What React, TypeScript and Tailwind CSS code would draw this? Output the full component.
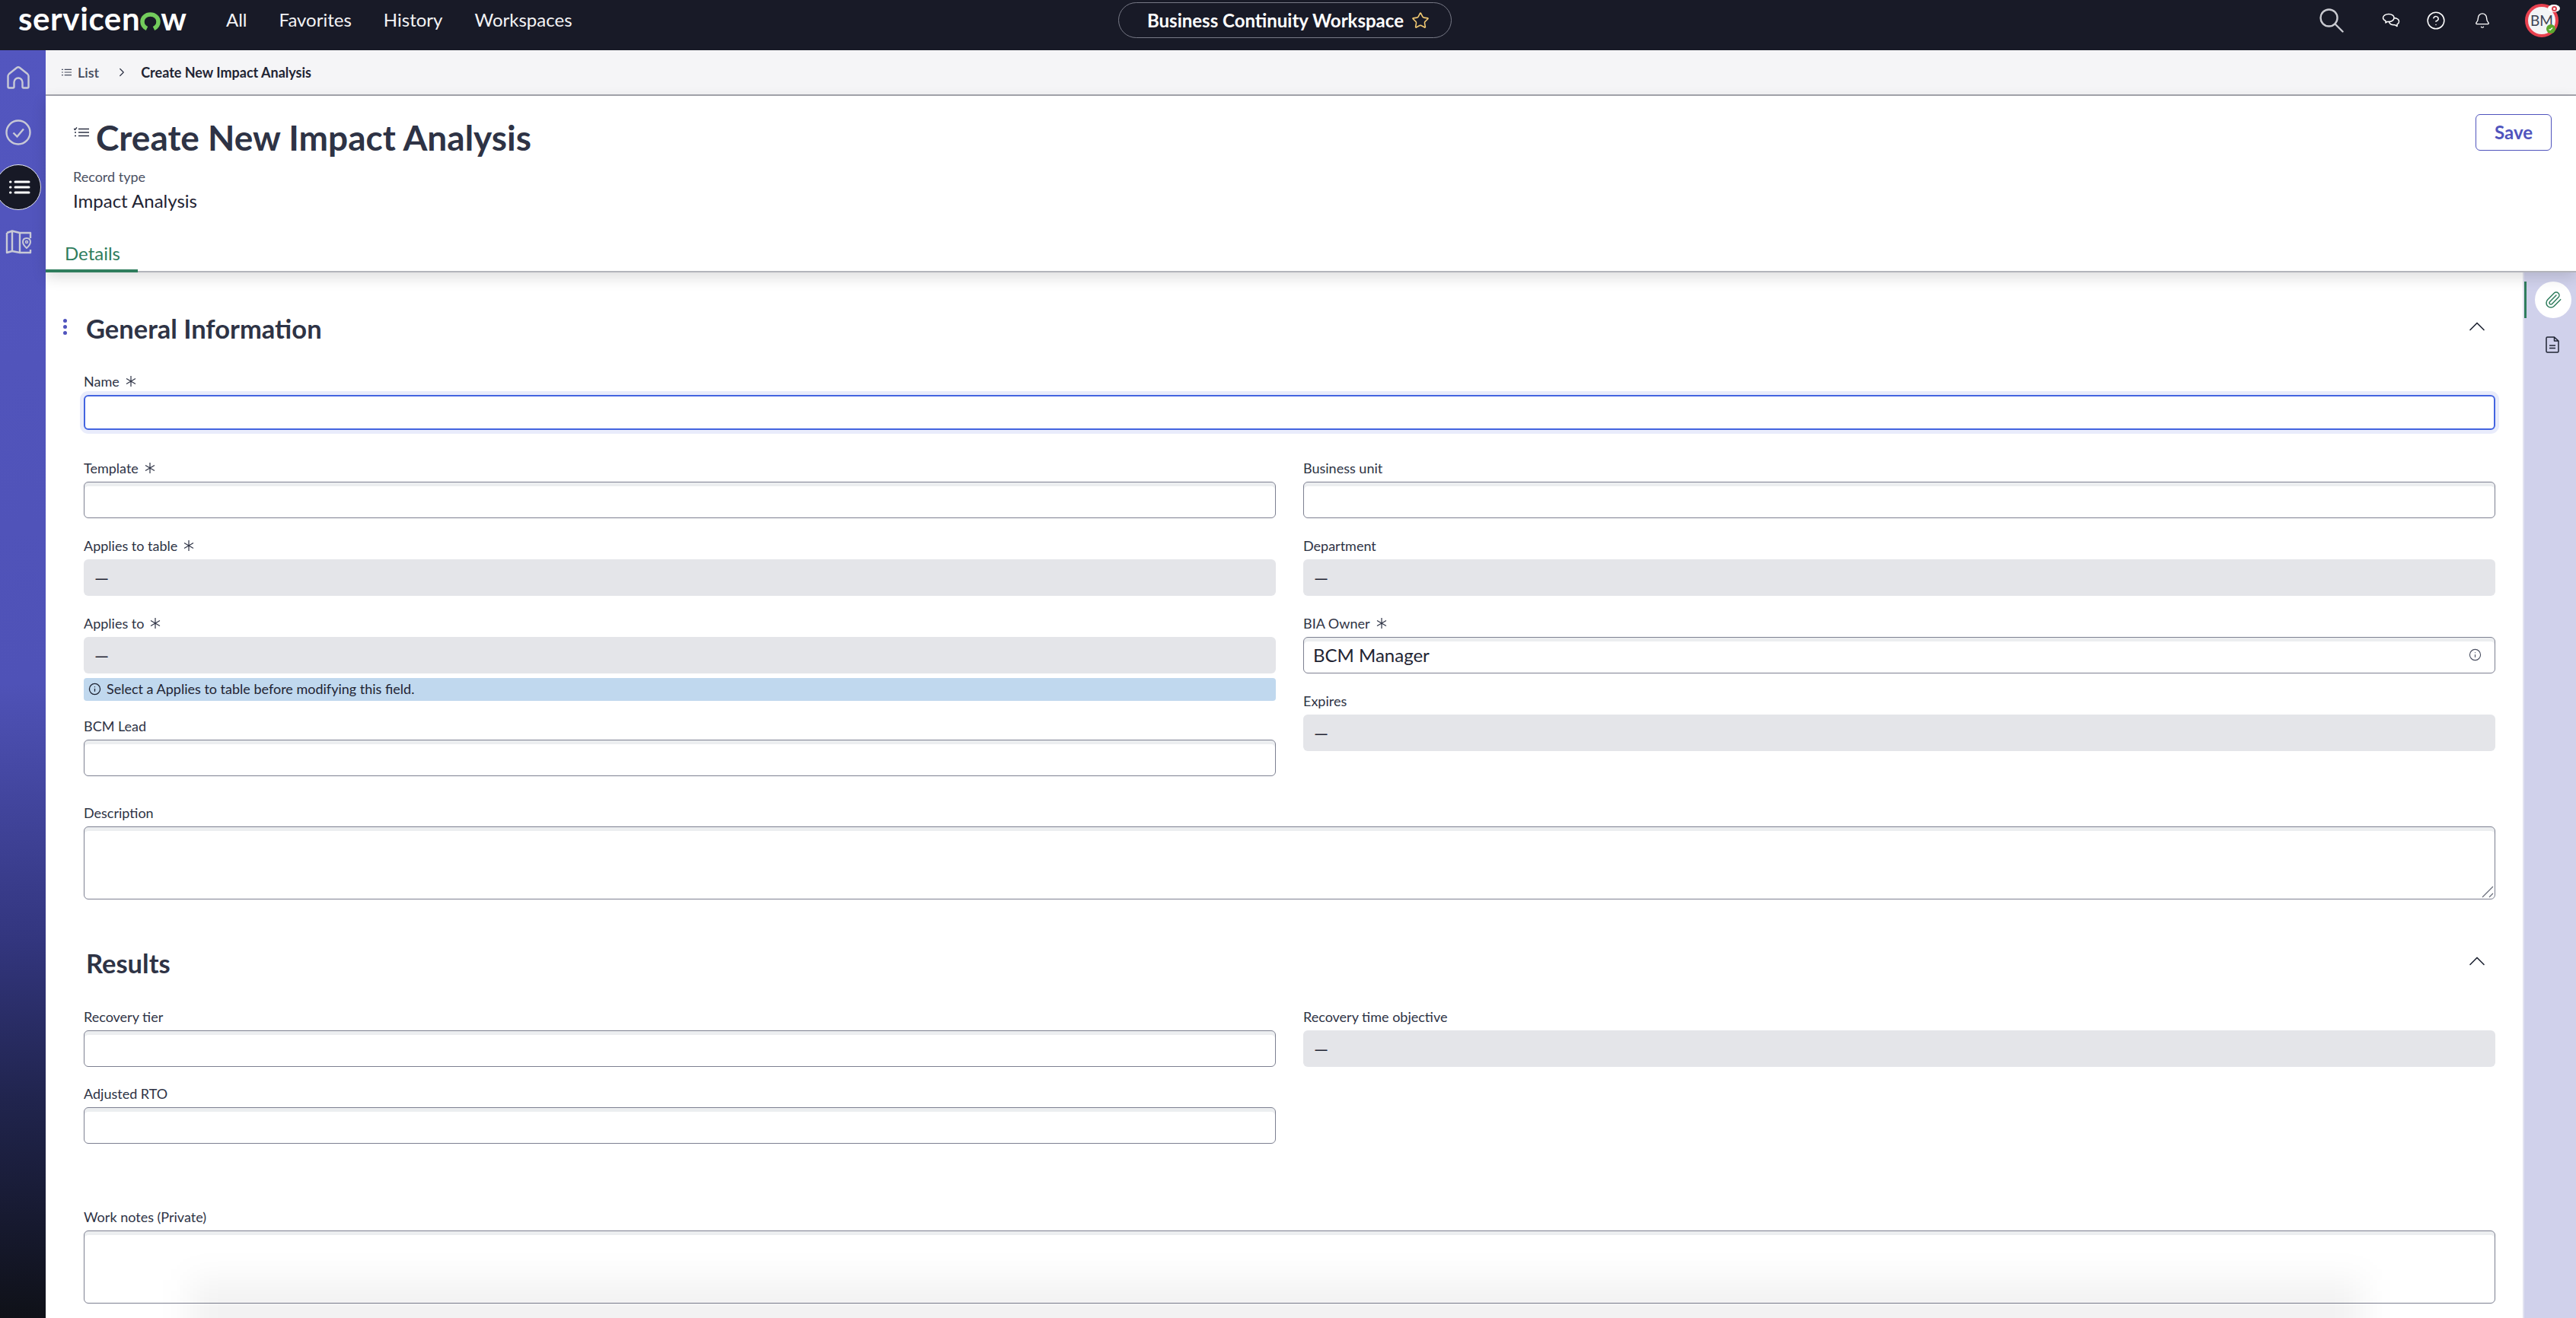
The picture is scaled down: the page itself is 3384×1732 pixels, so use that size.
import React from "react";
import { CircleHelp, Bell, ChevronUp, ChevronRight, Star, Paperclip, Info } from "lucide-react";

function Asterisk() {
  return (
    <svg viewBox="0 0 16 16" className="ml-[7px] h-[16px] w-[16px] text-[#2e3345]" fill="none" stroke="currentColor" strokeWidth="1.2">
      <path d="M8 1v14M2 4.5l12 7M14 4.5l-12 7" />
    </svg>
  );
}

function Label({ text, req }: { text: string; req?: boolean }) {
  return (
    <div className="flex h-[34px] items-center pb-[2px] text-[18px] text-[#2e3345]">
      <span>{text}</span>
      {req && <Asterisk />}
    </div>
  );
}

function Input({ label, req, children, h = "h-[48px]" }: { label: string; req?: boolean; children?: React.ReactNode; h?: string }) {
  return (
    <div>
      <Label text={label} req={req} />
      <div className={`relative flex items-center rounded-[6px] border-[1.5px] border-[#7d8091] bg-white shadow-[inset_0_5px_0_#eceef0] ${h}`}>
        {children}
      </div>
    </div>
  );
}

function ReadOnly({ label, req }: { label: string; req?: boolean }) {
  return (
    <div>
      <Label text={label} req={req} />
      <div className="flex h-[48px] items-center rounded-[6px] bg-[#e4e5e9] pl-[14px] text-[24px] text-[#1f2433]">—</div>
    </div>
  );
}

function ListIcon({ className }: { className: string }) {
  return (
    <svg viewBox="0 0 28 20" className={className} fill="none" stroke="currentColor" strokeLinecap="round">
      <path strokeWidth="3" d="M8 3h18M8 10h18M8 17h18" />
      <path strokeWidth="3" d="M1.5 3h.5M1.5 10h.5M1.5 17h.5" />
    </svg>
  );
}

export default function App() {
  return (
    <div className="flex h-[1732px] w-[3384px] flex-col overflow-hidden bg-white font-['Lato','Liberation_Sans',sans-serif] text-[#2e3345]">
      <header className="relative flex h-[66px] shrink-0 items-center bg-[#181a27] text-white">
        <div className="ml-[24px] flex h-[50px] w-[224px] -translate-y-[9px] items-center text-[42px] font-bold leading-none tracking-[0.6px]">
          <span>servicen</span>
          <svg viewBox="0 0 27 24" className="mt-[8px] h-[24px] w-[27px] shrink-0" role="img" aria-label="o">
            <path d="M9 21.500C5 19.500 3 16 3 12.500 3 7 7.500 3 13.500 3S24 7 24 12.500c0 3.500-2 7-6 9" fill="none" stroke="#73cc5c" strokeWidth="5.500" />
          </svg>
          <span>w</span>
        </div>
        <nav className="ml-[49px] flex -translate-y-[7px] items-center gap-[42px] text-[24px] text-[#f3f3f5]">
          <span>All</span>
          <span>Favorites</span>
          <span>History</span>
          <span>Workspaces</span>
        </nav>
        <div className="absolute left-[1469px] top-[3px] flex h-[47px] w-[438px] items-center rounded-full border-[1.5px] border-[#777986] pl-[37px]">
          <span className="text-[24px] font-bold">Business Continuity Workspace</span>
          <Star className="ml-[10px] h-[24px] w-[24px] text-[#f0c872]" strokeWidth={1.6} />
        </div>
        <div className="ml-auto mr-[23px] flex -translate-y-[6px] items-center">
          <svg viewBox="0 0 32 32" className="h-[32px] w-[32px] text-[#c9cad0]" fill="none" stroke="currentColor" strokeWidth="2.400" strokeLinecap="round">
            <circle cx="12.500" cy="12.500" r="11" />
            <path d="M20.500 20.500L30.500 30.500" />
          </svg>
          <svg viewBox="0 0 24 20" className="ml-[50px] h-[20px] w-[24px]" fill="none" stroke="white" strokeWidth="1.5" strokeLinejoin="round">
            <path d="M9 1.500c4 0 7 2.200 7 5s-3 5-7 5c-.7 0-1.200 0-1.700-.1L5 13v-2.600C2.900 9.500 1.500 8.100 1.500 6.500c0-2.800 3.300-5 7.500-5z" />
            <path d="M15.500 6.500c3.800.3 7 2 7 4.800 0 1.500-1 2.800-2.500 3.600V17.500l-2.600-1.700c-3.400.3-7-1-8-4" />
          </svg>
          <CircleHelp className="ml-[34px] h-[26px] w-[26px] text-white" strokeWidth={1.4} />
          <Bell className="ml-[37px] h-[22px] w-[22px] text-white" strokeWidth={1.5} />
          <div className="relative ml-[45px] flex h-[44px] w-[44px] items-center justify-center rounded-full border-[4px] border-[#e8414f] bg-[#f3f4f6] text-[19px] text-[#3f4454]">
            BM
            <span className="absolute left-[26px] -top-[3px] flex h-[10px] w-[16px] items-center justify-center rounded-[50%] bg-white">
              <span className="h-[7px] w-[7px] rounded-full border-[2px] border-[#d9414f]" />
            </span>
            <svg viewBox="0 0 12 12" className="absolute left-[24px] top-[23px] h-[12px] w-[12px]">
              <circle cx="6" cy="6" r="6" fill="#5ba82d" />
              <path d="M3.500 6.500l1.500 1 3-3" fill="none" stroke="white" strokeWidth="1.300" />
            </svg>
          </div>
        </div>
      </header>
      <div className="flex min-h-0 flex-1">
        <aside className="flex w-[60px] shrink-0 flex-col bg-[linear-gradient(180deg,#5356bf_0%,#4f52b7_50%,#33367f_70%,#20244d_83%,#0f1118_100%)] text-[#c8c9d6]">
          <svg viewBox="0 0 30 30" className="ml-[9px] mt-[21px] h-[30px] w-[30px]" fill="none" stroke="currentColor" strokeWidth="2.400" strokeLinejoin="round">
            <path d="M3 28.500a1.500 1.500 0 01-1.500-1.500V13q0-1.500 1.500-3L13 2q2-1.500 4 0l10 8q1.500 1.500 1.500 3v14a1.500 1.500 0 01-1.500 1.500h-5a1.500 1.500 0 01-1.500-1.500v-6a5.500 5.500 0 00-11 0v6a1.500 1.500 0 01-1.500 1.500z" />
          </svg>
          <svg viewBox="0 0 34 34" className="ml-[7px] mt-[40px] h-[34px] w-[34px]" fill="none" stroke="currentColor" strokeWidth="2.400">
            <circle cx="17" cy="17" r="15.500" />
            <path d="M10.500 17.500l5 5 8.500-10" />
          </svg>
          <div className="-ml-[6px] mt-[25px] flex h-[60px] w-[60px] items-center justify-center rounded-full border border-[#e7e8f4] bg-[#171926] pl-[4px]">
            <ListIcon className="h-[20px] w-[28px] text-white" />
          </div>
          <svg viewBox="0 0 36 32" className="ml-[7px] mt-[26px] h-[32px] w-[36px]" fill="none" stroke="currentColor" strokeWidth="2.400" strokeLinejoin="round">
            <path d="M2 4l7-2.500 10 2.500h14v7M2 4v26l7-2 10 2h14v-4M9 1.500V28M19 4v26" />
            <path d="M28 11c-3 0-5 2-5 5 0 3.500 5 8 5 8s5-4.500 5-8c0-3-2-5-5-5z" strokeWidth="2" />
            <circle cx="28" cy="16" r="1.500" strokeWidth="1.500" />
          </svg>
        </aside>
        <main className="flex min-w-0 flex-1 flex-col">
          <div className="flex h-[60px] shrink-0 items-center border-b-[2px] border-[#a5a6ae] bg-[#f5f5f7] pl-[21px] text-[18px]">
            <svg viewBox="0 0 14 12" className="h-[12px] w-[13px] text-[#444a5c]" fill="none" stroke="currentColor" strokeWidth="1.300">
              <path d="M4 2h10M4 6h10M4 10h10M0 2h2M0 6h2M0 10h2" />
            </svg>
            <span className="ml-[8px] font-semibold text-[#444a5c]">List</span>
            <ChevronRight className="ml-[21px] h-[18px] w-[18px] text-[#2e3345]" strokeWidth={1.6} />
            <span className="ml-[16px] font-bold text-[#1f2433]">Create New Impact Analysis</span>
          </div>
          <div className="relative z-10 h-[232px] shrink-0 border-b-[2px] border-[#b3b4bb] bg-white shadow-[0_6px_18px_rgba(0,0,0,0.14)]">
            <div className="flex items-start justify-between pl-[37px] pr-[32px] pt-[24px]">
              <div className="flex items-start">
                <svg viewBox="0 0 20 14" className="mt-[17px] h-[14px] w-[20px] text-[#2e3345]" fill="none" stroke="currentColor" strokeWidth="1.400">
                  <path d="M6 2.500h14M6 7h14M6 11.500h14M0 2l1.500 1.500L4 0.500M1 7h2M1 11.500h2" />
                </svg>
                <h1 className="ml-[9px] text-[46px] font-bold leading-[62px] text-[#2e3345]">Create New Impact Analysis</h1>
              </div>
              <button className="h-[48px] w-[100px] rounded-[6px] border-[1.5px] border-[#5054bd] text-[24px] font-bold text-[#5054bd]">Save</button>
            </div>
            <div className="pl-[36px] pt-[5px] text-[18px] leading-[30px] text-[#4b5062]">Record type</div>
            <div className="pl-[36px] pt-[1px] text-[24px] leading-[32px] text-[#1f2433]">Impact Analysis</div>
            <div className="absolute bottom-[-2px] left-0 flex h-[44px] w-[121px] items-start justify-center border-b-[4px] border-[#2f7d5d] pl-[2px] text-[24px] leading-[37px] text-[#2f7d5d]">Details</div>
          </div>
          <div className="flex min-h-0 flex-1">
            <section className="relative min-w-0 flex-1 bg-white pl-[50px] pr-[36px]">
              <div className="relative flex h-[127px] items-center pt-[22px]">
                <span className="absolute left-[-27px] top-[61px] flex flex-col gap-[3px]">
                  <i className="h-[5px] w-[5px] rounded-full bg-[#5054bd]" />
                  <i className="h-[5px] w-[5px] rounded-full bg-[#5054bd]" />
                  <i className="h-[5px] w-[5px] rounded-full bg-[#5054bd]" />
                </span>
                <h2 className="ml-[3px] -translate-y-[1px] text-[34.5px] font-bold text-[#2e3345]">General Information</h2>
                <ChevronUp className="absolute right-[6px] top-[53px] h-[36px] w-[36px] text-[#1f2433]" strokeWidth={1.1} />
              </div>
              <div>
                <Label text="Name" req />
                <div className="h-[46px] rounded-[6px] border-[2.5px] border-[#4364e0] bg-white shadow-[0_0_0_5px_#e9ecfb]" />
              </div>
              <div className="mt-[34px] grid grid-cols-2 gap-x-[36px]">
                <div className="flex flex-col gap-[20px]">
                  <Input label="Template" req />
                  <ReadOnly label="Applies to table" req />
                  <div>
                    <ReadOnly label="Applies to" req />
                    <div className="mt-[6px] flex h-[30px] items-center rounded-[4px] bg-[#c0d8ee] pb-[2px] pl-[6px] text-[18px] text-[#1f2433]">
                      <Info className="h-[17px] w-[17px]" strokeWidth={1.8} />
                      <span className="ml-[7px]">Select a Applies to table before modifying this field.</span>
                    </div>
                  </div>
                  <div className="-mt-[3px]"><Input label="BCM Lead" /></div>
                </div>
                <div className="flex flex-col gap-[20px]">
                  <Input label="Business unit" />
                  <ReadOnly label="Department" />
                  <Input label="BIA Owner" req>
                    <span className="ml-[12px] text-[24px] text-[#1f2433]">BCM Manager</span>
                    <Info className="absolute right-[17px] top-[14px] h-[17px] w-[17px] text-[#4b5062]" strokeWidth={1.6} />
                  </Input>
                  <ReadOnly label="Expires" />
                </div>
              </div>
              <div className="mt-[32px]">
                <Input label="Description" h="h-[96px]">
                  <svg viewBox="0 0 16 16" className="absolute bottom-[1px] right-[1px] h-[16px] w-[16px] text-[#666a78]" fill="none" stroke="currentColor" strokeWidth="1.200">
                    <path d="M1 15L15 1M10 15l5-5" />
                  </svg>
                </Input>
              </div>
              <div className="relative flex h-[138px] items-center">
                <h2 className="ml-[3px] translate-y-[15px] text-[34.5px] font-bold text-[#2e3345]">Results</h2>
                <ChevronUp className="absolute right-[6px] top-[63px] h-[36px] w-[36px] text-[#1f2433]" strokeWidth={1.1} />
              </div>
              <div className="grid grid-cols-2 gap-x-[36px]">
                <div className="flex flex-col gap-[19px]">
                  <Input label="Recovery tier" />
                  <Input label="Adjusted RTO" />
                </div>
                <div>
                  <ReadOnly label="Recovery time objective" />
                </div>
              </div>
              <div className="mt-[80px]">
                <Input label="Work notes (Private)" h="h-[96px]" />
              </div>
              <div className="pointer-events-none absolute bottom-[-70px] left-[190px] right-[210px] h-[120px] bg-black/[0.05] blur-[22px]" />
            </section>
            <aside className="flex w-[70px] shrink-0 flex-col border-l-[2px] border-[#e2e3f0] bg-[#d0d1eb]">
              <div className="relative mt-[12px] h-[48px] pl-[14px]">
                <span className="absolute left-0 top-0 h-[48px] w-[3px] bg-[#2f7d5d]" />
                <span className="flex h-[48px] w-[48px] items-center justify-center rounded-full bg-white">
                  <Paperclip className="h-[24px] w-[24px] text-[#2f7d5d]" strokeWidth={1.5} />
                </span>
              </div>
              <div className="mt-[24px] flex justify-center pl-[6px]">
                <svg viewBox="0 0 18 22" className="h-[22px] w-[18px] text-[#1f2433]" fill="none" stroke="currentColor" strokeWidth="1.500" strokeLinejoin="round">
                  <path d="M2.500 1h9l5.500 5v13.500a1.500 1.500 0 01-1.500 1.500h-13A1.500 1.500 0 011 19.500V2.500A1.500 1.500 0 012.500 1zM11.500 1v5H17M5 12h8M5 15.500h8" />
                </svg>
              </div>
            </aside>
          </div>
        </main>
      </div>
    </div>
  );
}
